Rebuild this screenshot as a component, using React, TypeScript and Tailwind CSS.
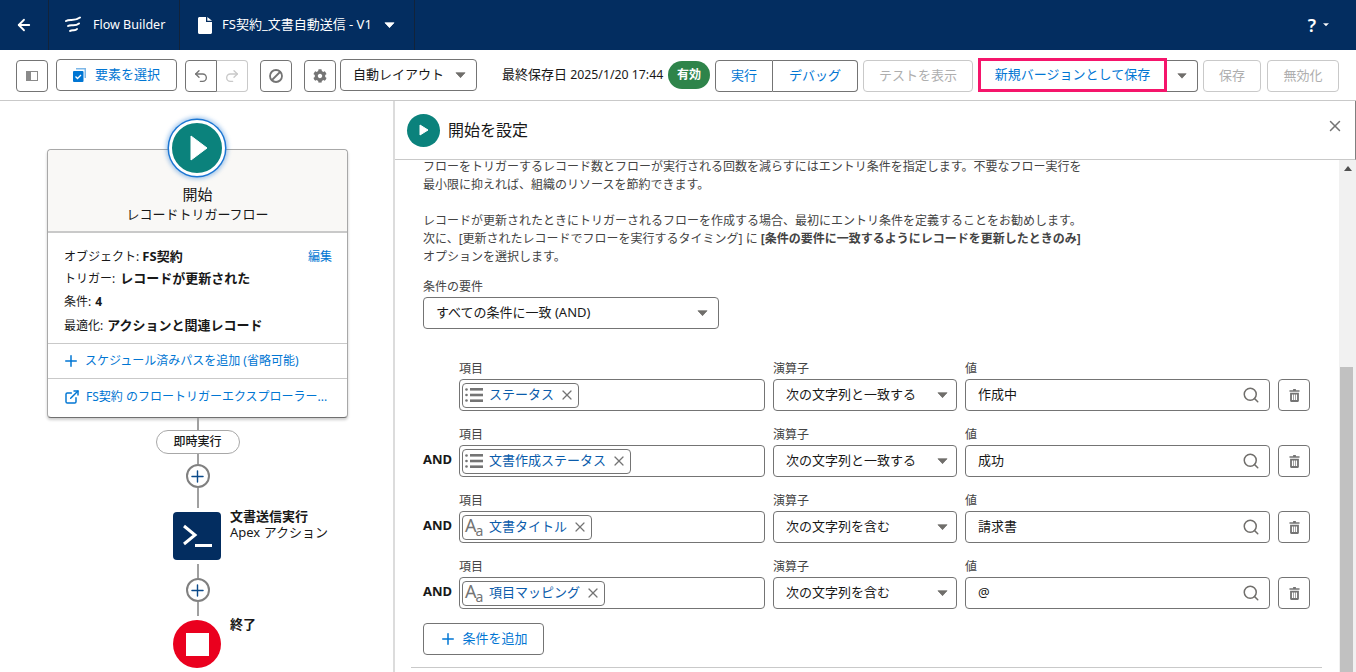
import { ArrowLeft, Plus, Search, Undo2, Redo2, X, ExternalLink } from "lucide-react";
import { FaCog } from "react-icons/fa";

function Caret({ className = "text-[#706e6b]", w = 14 }: { className?: string; w?: number }) {
  return (
    <svg width={w} height={w * 0.55} viewBox="0 0 14 8" className={className}>
      <path d="M1 1h12L7 7.5z" fill="currentColor" stroke="currentColor" strokeLinejoin="round" />
    </svg>
  );
}

function Btn({ className = "", children }: { className?: string; children: React.ReactNode }) {
  return (
    <div className={`flex items-center justify-center rounded border border-[#747474] bg-white h-8 ${className}`}>
      {children}
    </div>
  );
}

function ListIcon() {
  return (
    <svg width="18" height="16" viewBox="0 0 18 16" className="text-[#747474] shrink-0">
      <g fill="currentColor">
        <circle cx="1.5" cy="2.5" r="1.3" />
        <circle cx="1.5" cy="8" r="1.3" />
        <circle cx="1.5" cy="13.5" r="1.3" />
        <rect x="5" y="1" width="13" height="2.6" />
        <rect x="5" y="6.7" width="13" height="2.6" />
        <rect x="5" y="12.4" width="13" height="2.6" />
      </g>
    </svg>
  );
}

function TextIcon() {
  return (
    <span className="flex items-end w-[18px] shrink-0 text-[#747474] leading-none h-[20px]">
      <span className="text-[18px] leading-[18px] mb-[3px]">A</span>
      <span className="text-[14px] leading-[13px] -ml-[1px]">a</span>
    </span>
  );
}

function Trash() {
  return (
    <svg width="11" height="13" viewBox="0 0 12 14" className="text-[#747474]">
      <path
        fill="currentColor"
        fillRule="evenodd"
        d="M4.5 0h3v1.4h4V3H.5V1.4h4zM1.2 4h9.6v8.8c0 .7-.5 1.2-1.2 1.2H2.4c-.7 0-1.2-.5-1.2-1.2zm2 2v6h1.4V6zm2.1 0v6h1.4V6zm2.1 0v6h1.4V6z"
      />
    </svg>
  );
}

const rows = [
  { and: false, icon: "list", chip: "ステータス", op: "次の文字列と一致する", val: "作成中" },
  { and: true, icon: "list", chip: "文書作成ステータス", op: "次の文字列と一致する", val: "成功" },
  { and: true, icon: "text", chip: "文書タイトル", op: "次の文字列を含む", val: "請求書" },
  { and: true, icon: "text", chip: "項目マッピング", op: "次の文字列を含む", val: "@" },
];

function Field({ label, className = "", children }: { label: string; className?: string; children: React.ReactNode }) {
  return (
    <div className={`flex flex-col ${className}`}>
      <div className="h-[18px] leading-[20px] text-[12px] text-[#444444] mb-[2px]">{label}</div>
      {children}
    </div>
  );
}

function Row({ r }: { r: (typeof rows)[number] }) {
  return (
    <div className="flex items-end">
      <div className="w-[36px] h-8 -translate-y-[1px] flex items-center text-[13px] font-bold text-[#181818]">
        {r.and ? "AND" : ""}
      </div>
      <Field label="項目" className="w-[306px]">
        <div className="h-8 rounded border border-[#747474] flex items-center pl-[2px]">
          <div className="h-[25px] rounded border border-[#747474] flex items-center pl-[2px] pr-[3px]">
            {r.icon === "list" ? <ListIcon /> : <TextIcon />}
            <span className="ml-[6px] text-[13px] text-[#0b5cab]">{r.chip}</span>
            <X size={16} strokeWidth={1.8} className="ml-[5px] text-[#747474]" />
          </div>
        </div>
      </Field>
      <Field label="演算子" className="w-[184px] ml-2">
        <div className="h-8 rounded border border-[#747474] flex items-center justify-between pl-3 pr-[8px] text-[13px] text-[#181818]">
          <span>{r.op}</span>
          <Caret w={11} />
        </div>
      </Field>
      <Field label="値" className="w-[305px] ml-2">
        <div className="h-8 rounded border border-[#747474] flex items-center justify-between pl-3 pr-[9px] text-[13px] text-[#181818]">
          <span>{r.val}</span>
          <Search size={18} strokeWidth={2} className="text-[#706e6b]" />
        </div>
      </Field>
      <Btn className="w-8 ml-2">
        <Trash />
      </Btn>
    </div>
  );
}

function Connector({ h }: { h: number }) {
  return <div className="w-[2px] bg-[#a0a0a0] shrink-0" style={{ height: h }} />;
}

function AddCircle() {
  return (
    <div className="size-6 shrink-0 rounded-full border-2 border-[#808080] bg-white flex items-center justify-center">
      <Plus size={19} strokeWidth={1.8} className="text-[#0b4a8a]" />
    </div>
  );
}

function Canvas() {
  return (
    <div className="w-[395px] shrink-0 pl-[2px] border-r-2 border-[#dcdcdc] flex flex-col items-center pt-[19px] bg-white overflow-hidden">
      <div className="relative z-10 -ml-[1px] size-[56px] shrink-0 rounded-full bg-[#0b827c] border-[3px] border-white shadow-[0_0_0_1.5px_#1b76d3,0_0_4px_3px_rgba(27,118,211,0.4)] flex items-center justify-center">
        <svg width="18" height="26" viewBox="0 0 18 26" className="ml-[3px]">
          <path d="M1 1l16 12L1 25z" fill="white" stroke="white" strokeLinejoin="round" />
        </svg>
      </div>
      <div className="w-[301px] -mt-[27px] rounded border border-[#a8a8a8] border-b-[#707070] bg-white shadow-[0_2px_3px_rgba(0,0,0,0.2)] shrink-0">
        <div className="h-[83px] bg-[#f9f8f6] border-b-2 border-[#c9c9c9] flex flex-col items-center pt-[33px] rounded-t">
          <div className="text-[15px] leading-[22px] text-[#181818]">開始</div>
          <div className="text-[13px] leading-[19px] text-[#181818]">レコードトリガーフロー</div>
        </div>
        <div className="h-[111px] pl-4 pr-[15px] pt-[12px] text-[12px] text-[#181818] border-b border-[#c9c9c9]">
          <div className="h-[23px] flex items-center justify-between">
            <span>
              オブジェクト: <b className="text-[13px]">FS契約</b>
            </span>
            <span className="text-[#0176d3]">編集</span>
          </div>
          <div className="h-[22px] flex items-center">
            トリガー:<b className="text-[13px] ml-[5px]">レコードが更新された</b>
          </div>
          <div className="h-[24px] flex items-center">
            条件:<b className="ml-[4px]">4</b>
          </div>
          <div className="h-[23px] flex items-center">
            最適化:<b className="text-[13px] ml-[4px]">アクションと関連レコード</b>
          </div>
        </div>
        <div className="h-[35px] px-4 flex items-center border-b border-[#c9c9c9] text-[12px] text-[#0176d3]">
          <Plus size={18} strokeWidth={2} className="-ml-[2px] mr-[5px]" />
          スケジュール済みパスを追加 (省略可能)
        </div>
        <div className="h-[38px] px-4 pb-[2px] flex items-center text-[12px] text-[#0176d3]">
          <ExternalLink size={16} strokeWidth={2.2} className="mr-[6px]" />
          FS契約 のフロートリガーエクスプローラー...
        </div>
      </div>
      <Connector h={12} />
      <div className="w-[84px] h-6 shrink-0 rounded-full border border-[#a8a8a8] bg-white flex items-center justify-center text-[12px] font-medium text-[#181818]">
        即時実行
      </div>
      <Connector h={10} />
      <AddCircle />
      <Connector h={20} />
      <div className="relative -ml-[1px] size-12 mt-[4px] shrink-0 rounded bg-[#032d60] flex items-center justify-center">
        <svg width="30" height="26" viewBox="0 0 30 26">
          <path d="M2 3l11 9L2 21" fill="none" stroke="white" strokeWidth="3" />
          <rect x="13" y="21" width="17" height="3" fill="white" />
        </svg>
        <div className="absolute left-[57px] -top-[4px] whitespace-nowrap">
          <div className="text-[13px] font-bold leading-[17px] text-[#181818]">文書送信実行</div>
          <div className="text-[13px] leading-[15px] text-[#181818]">Apex アクション</div>
        </div>
      </div>
      <div className="mt-[4px]">
        <Connector h={14} />
      </div>
      <AddCircle />
      <Connector h={14} />
      <div className="relative -ml-[1px] size-12 mt-[4px] shrink-0 rounded-full bg-[#ea001e] flex items-center justify-center">
        <div className="size-[23px] bg-white" />
        <div className="absolute left-[57px] -top-[4px] whitespace-nowrap text-[13px] font-bold leading-[17px] text-[#181818]">
          終了
        </div>
      </div>
    </div>
  );
}

function Panel() {
  return (
    <div className="flex-1 flex flex-col min-w-0 bg-white">
      <div className="h-[59px] shrink-0 border-b border-r border-b-[#c9c9c9] border-r-[#808080] flex items-center pl-3 pr-[11px]">
        <div className="size-[33px] rounded-full bg-[#0b827c] flex items-center justify-center">
          <svg width="10" height="12" viewBox="0 0 10 12">
            <path d="M1 1l8 5-8 5z" fill="white" stroke="white" strokeLinejoin="round" />
          </svg>
        </div>
        <div className="ml-2 text-[16px] text-[#181818]">開始を設定</div>
        <X size={18} strokeWidth={2} className="ml-auto -translate-y-[4px] text-[#747474]" />
      </div>
      <div className="flex-1 flex min-h-0">
        <div className="flex-1 min-w-0 overflow-hidden">
          <div className="-mt-[2px] pl-[28px]">
            <div className="text-[12px] leading-[18px] text-[#444444]">
              <p>
                フローをトリガーするレコード数とフローが実行される回数を減らすにはエントリ条件を指定します。不要なフロー実行を
                <br />
                最小限に抑えれば、組織のリソースを節約できます。
              </p>
              <p className="mt-[18px]">
                レコードが更新されたときにトリガーされるフローを作成する場合、最初にエントリ条件を定義することをお勧めします。
                <br />
                次に、[更新されたレコードでフローを実行するタイミング] に <b>[条件の要件に一致するようにレコードを更新したときのみ]</b>
                <br />
                オプションを選択します。
              </p>
            </div>
            <div className="mt-3 h-[18px] leading-[18px] text-[12px] text-[#444444] mb-[1px]">条件の要件</div>
            <div className="w-[296px] h-8 rounded border border-[#747474] flex items-center justify-between pl-3 pr-[10px] text-[13px] text-[#181818]">
              <span>すべての条件に一致 (AND)</span>
              <Caret w={11} />
            </div>
            <div className="mt-[30px] flex flex-col gap-[14px]">
              {rows.map((r) => (
                <Row key={r.chip} r={r} />
              ))}
            </div>
            <Btn className="mt-[14px] w-[121px] text-[13px] text-[#0176d3]">
              <Plus size={18} strokeWidth={2} className="mr-[5px]" />
              条件を追加
            </Btn>
            <div className="mt-3 -ml-3 w-[911px] h-px bg-[#c9c9c9]" />
          </div>
        </div>
        <div className="w-[17px] shrink-0 bg-[#f1f1f1] flex flex-col">
          <div className="h-[17px] shrink-0 flex items-center justify-center">
            <svg width="8" height="5" viewBox="0 0 8 5">
              <path d="M4 0l4 5H0z" fill="#505050" />
            </svg>
          </div>
          <div className="h-[190px] shrink-0" />
          <div className="flex-1 ml-[1px] mr-[3px] bg-[#c1c1c1]" />
        </div>
      </div>
    </div>
  );
}

export default function App() {
  return (
    <div className="w-[1356px] h-[672px] overflow-hidden flex flex-col bg-white text-[#181818] [font-family:'Noto_Sans','Noto_Sans_CJK_JP',sans-serif]">
      <header className="h-[50px] shrink-0 bg-[#032d60] text-white flex items-center">
        <div className="w-[49px] h-full border-r border-[#12233a] flex items-center justify-center">
          <ArrowLeft size={18} strokeWidth={2.4} />
        </div>
        <div className="w-[131px] h-full border-r border-[#12233a] flex items-center pl-[16px] text-[12.5px]">
          <svg width="16" height="18" viewBox="0 0 16 18" className="mr-[12px]">
            <g fill="none" stroke="white" strokeWidth="2" strokeLinecap="round">
              <path d="M1 5C5 2.5 9 6 15 1.5" />
              <path d="M3 10C6 8 10 11 14 7.5" />
              <path d="M5 15C7.5 13 10 15.5 12 13" />
            </g>
          </svg>
          Flow Builder
        </div>
        <div className="w-[235px] h-full border-r border-[#12233a] flex items-center pl-[18px] text-[13px]">
          <svg width="14" height="17" viewBox="0 0 14 17" className="mr-[10px] shrink-0">
            <path fill="white" d="M1.5 0H8v5h6v10.5c0 .8-.7 1.5-1.5 1.5h-11C.7 17 0 16.300 0 15.500v-14C0 .7.700 0 1.500 0zM9.300 0 14 3.800H9.300z" />
          </svg>
          FS契約_文書自動送信 - V1
          <Caret className="text-white ml-[12px]" w={11} />
        </div>
        <div className="ml-auto flex items-center mr-[27px]">
          <span className="text-[18px] font-semibold">?</span>
          <Caret className="text-white ml-[7px]" w={6} />
        </div>
      </header>
      <div className="h-[51px] shrink-0 border-b border-[#c9c9c9] flex items-center pl-4 text-[13px]">
        <Btn className="w-8 translate-y-[1px]">
          <svg width="12" height="10" viewBox="0 0 12 10" className="text-[#8a8a8a]">
            <rect x="0.5" y="0.5" width="11" height="9" fill="none" stroke="currentColor" />
            <rect x="1" y="1" width="4" height="8" fill="currentColor" />
          </svg>
        </Btn>
        <Btn className="ml-2 w-[121px] text-[#0176d3]">
          <svg width="13" height="14" viewBox="0 0 13 14" className="mr-[9px]">
            <path d="M3 0h10v10h-1.500V1.500H3z" fill="#7db7e8" />
            <rect x="0" y="3" width="10.500" height="11" rx="1" fill="#0176d3" />
            <path d="M2.500 8.500l2 2 3.500-3.500" fill="none" stroke="white" strokeWidth="1.300" />
          </svg>
          要素を選択
        </Btn>
        <div className="ml-2 flex h-8 translate-y-[1px]">
          <div className="w-8 rounded-l border border-[#747474] flex items-center justify-center">
            <Undo2 size={16} strokeWidth={2} className="text-[#747474]" />
          </div>
          <div className="w-[31px] rounded-r border border-l-0 border-[#c9c9c9] flex items-center justify-center">
            <Redo2 size={16} strokeWidth={2} className="text-[#c9c9c9]" />
          </div>
        </div>
        <Btn className="ml-3 w-8 translate-y-[1px]">
          <svg width="14" height="14" viewBox="0 0 14 14" className="text-[#747474]">
            <circle cx="7" cy="7" r="6" fill="none" stroke="currentColor" strokeWidth="1.800" />
            <path d="M3 11L11 3" stroke="currentColor" strokeWidth="1.800" />
          </svg>
        </Btn>
        <Btn className="ml-3 w-8 translate-y-[1px]">
          <FaCog size={14} className="text-[#747474]" />
        </Btn>
        <div className="ml-1 w-[137px] h-8 rounded border border-[#747474] flex items-center justify-between pl-3 pr-[10px]">
          <span>自動レイアウト</span>
          <Caret w={11} />
        </div>
        <span className="ml-[25px] w-[162px] shrink-0 whitespace-nowrap text-[12.300px]">
          <span className="text-[13px]">最終保存日</span> 2025/1/20 17:44
        </span>
        <div className="ml-[4px] w-[42px] h-7 rounded-full bg-[#2e844a] text-white text-[12px] font-bold flex items-center justify-center">
          有効
        </div>
        <div className="ml-[5px] flex h-8 translate-y-[1px] text-[#0176d3]">
          <div className="w-[58px] rounded-l border border-[#747474] flex items-center justify-center">実行</div>
          <div className="w-[85px] rounded-r border border-l-0 border-[#747474] flex items-center justify-center">デバッグ</div>
        </div>
        <div className="ml-[5px] w-[110px] h-8 translate-y-[1px] rounded border border-[#c9c9c9] text-[#aeaeae] flex items-center justify-center">
          テストを表示
        </div>
        <div className="ml-[5px] w-[189px] h-[34px] border-[3px] border-[#f5156b] text-[#0176d3] flex items-center justify-center">
          新規バージョンとして保存
        </div>
        <div className="w-[31px] h-8 translate-y-[1px] rounded-r border border-l-0 border-[#747474] flex items-center justify-center">
          <Caret w={10} />
        </div>
        <div className="ml-[5px] w-[58px] h-8 translate-y-[1px] rounded border border-[#c9c9c9] text-[#aeaeae] flex items-center justify-center">
          保存
        </div>
        <div className="ml-[6px] w-[72px] h-8 translate-y-[1px] rounded border border-[#c9c9c9] text-[#aeaeae] flex items-center justify-center">
          無効化
        </div>
      </div>
      <div className="flex-1 flex min-h-0">
        <Canvas />
        <Panel />
      </div>
    </div>
  );
}
